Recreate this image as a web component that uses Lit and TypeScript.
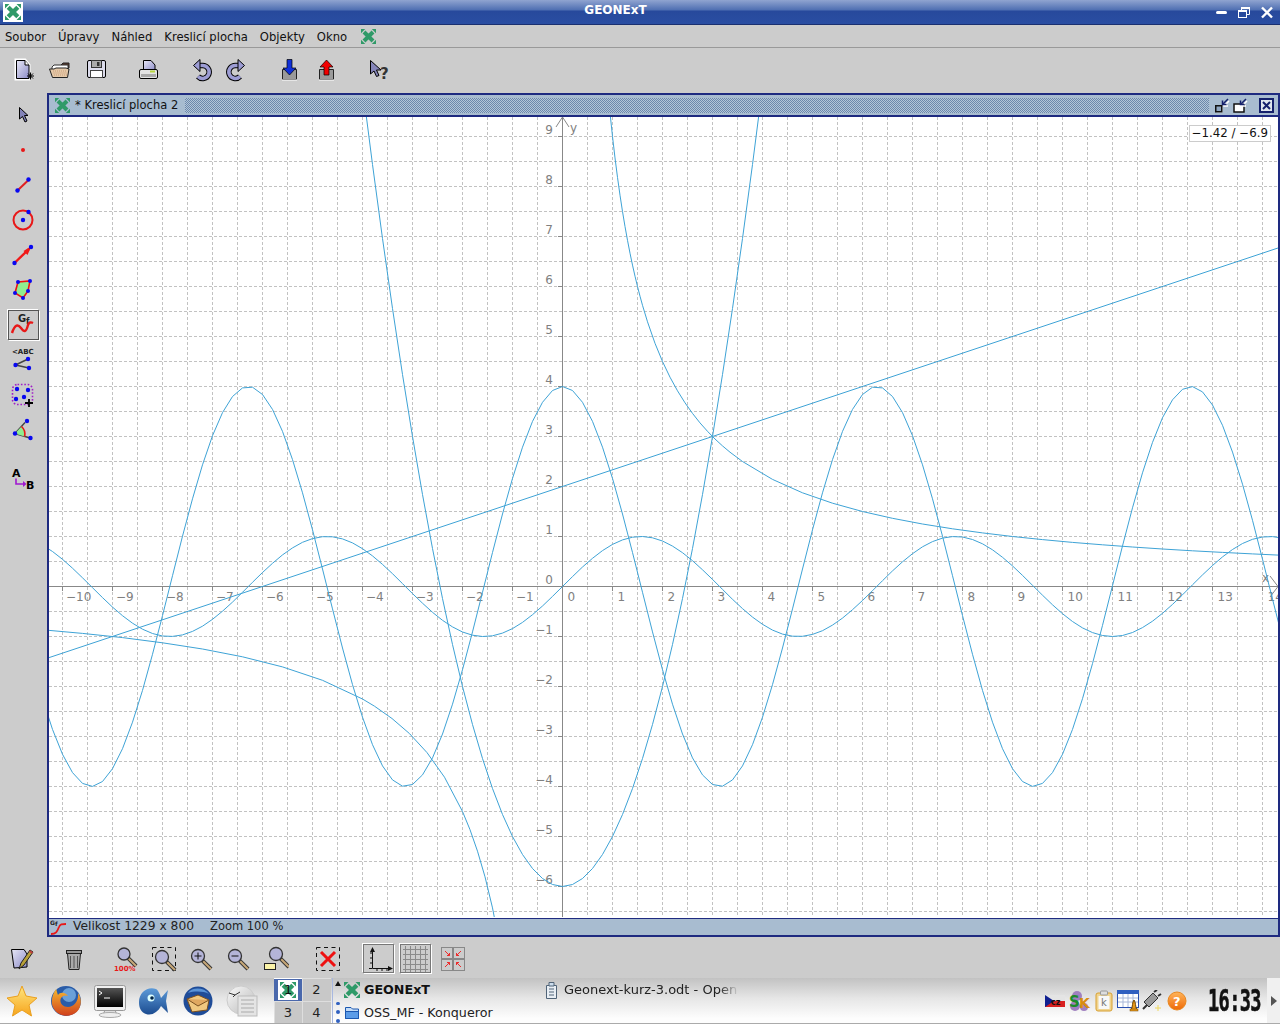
import { LitElement, html, svg, css } from "lit";
import { customElement } from "lit/decorators.js";

// small helper, all icons are drawn on a local pixel grid
const ic = (w: number, h: number, body: unknown) =>
  html`<svg width=${w} height=${h} viewBox="0 0 ${w} ${h}" aria-hidden="true">${body}</svg>`;

const xMark = (s: number, c = "#2f9a68") => {
  const a = s * 0.2;
  const b = s * 0.8;
  return svg`<g stroke=${c} stroke-width=${s * 0.27} fill=${c}>
    <path d="M${a} ${a}L${b} ${b}M${b} ${a}L${a} ${b}"/>
    </g>
    <path fill=${c} d="M0 ${s * 0.28}V0H${s * 0.28}ZM${s} ${s * 0.28}V0H${s * 0.72}ZM0 ${s * 0.72}V${s}H${s * 0.28}ZM${s} ${s * 0.72}V${s}H${s * 0.72}Z"/>`;
};

const defs = svg`<defs>
  <linearGradient id="lav" x1="0" y1="0" x2="1" y2="1"><stop offset="0" stop-color="#e8e8f6"/><stop offset="1" stop-color="#8c8cc8"/></linearGradient>
  <linearGradient id="ffx" x1="0" y1="0" x2="0" y2="1"><stop offset="0" stop-color="#f6b830"/><stop offset="1" stop-color="#d0401c"/></linearGradient>
  <linearGradient id="star" x1="0" y1="0" x2="0" y2="1"><stop offset="0" stop-color="#ffe680"/><stop offset="1" stop-color="#f6a41c"/></linearGradient>
  <linearGradient id="fish" x1="0" y1="0" x2="0" y2="1"><stop offset="0" stop-color="#5c9ad8"/><stop offset="1" stop-color="#1c4c90"/></linearGradient>
  <linearGradient id="screen" x1="0" y1="0" x2="0" y2="1"><stop offset="0" stop-color="#555"/><stop offset="1" stop-color="#000"/></linearGradient>
  <linearGradient id="orb" x1="0" y1="0" x2="0" y2="1"><stop offset="0" stop-color="#ffb45a"/><stop offset="1" stop-color="#ee6a08"/></linearGradient>
  <linearGradient id="moon" x1="0" y1="0" x2="1" y2="1"><stop offset="0" stop-color="#fafafa"/><stop offset="1" stop-color="#b8b8b8"/></linearGradient>
</defs>`;

const mag = (cx: number, cy: number, r: number) => svg`
  <path d="M${cx + r * 0.7} ${cy + r * 0.7}L${cx + r * 2} ${cy + r * 2}" stroke="#333" stroke-width="4"/>
  <path d="M${cx + r * 0.8} ${cy + r * 0.8}L${cx + r * 2} ${cy + r * 2}" stroke="#c8a878" stroke-width="2"/>
  <circle cx=${cx} cy=${cy} r=${r} fill="#b4b4d8" stroke="#333" stroke-width="1.3"/>`;

const blue = (x: number, y: number, r = 2.2) => svg`<circle cx=${x} cy=${y} r=${r} fill="#0808f0"/>`;

const topIcons = {
  doc: ic(24, 24, svg`<path d="M3 2H12L16 7V21H3Z" fill="url(#lav)" stroke="#fff" stroke-width="3"/><path d="M3.5 2.5H12L16 7V20.5H3.5Z" fill="url(#lav)" stroke="#000"/><path d="M12 2.5V7H16" fill="#fff" stroke="#000"/><path d="M14 18H21M17.5 14.5V21.5M15 15.5L20 20.5M20 15.5L15 20.5" stroke="#000"/>`),
  open: ic(24, 24, svg`<path d="M14 7L16 5H22V10H14Z" fill="#5c3c30" stroke="#222"/><path d="M5 9L7 7H21V12H5Z" fill="#fff" stroke="#333"/><path d="M2.5 11H7L9 10H19L22 11L20.5 19.5H5.5Z" fill="#e4c8a8" stroke="#222"/><path d="M6 13H20M6.500 15H20M7 17H20" stroke="#c89c78" stroke-dasharray="1 1"/>`),
  save: ic(24, 24, svg`<rect x="3.5" y="2.5" width="18" height="17" rx="1.5" fill="#dcdcec" stroke="#000"/><rect x="7.5" y="2.5" width="10" height="7" fill="#aaa" stroke="#333"/><rect x="13" y="4" width="2.5" height="4" fill="#333"/><rect x="6.5" y="12.5" width="12" height="7" fill="#fff" stroke="#444"/>`),
  print: ic(24, 24, svg`<path d="M7.5 2.5H15L19 7V13H7.5Z" fill="url(#lav)" stroke="#000"/><rect x="3.5" y="11.5" width="18" height="9" rx="1.5" fill="#e4e4e4" stroke="#000"/><rect x="5" y="16" width="15" height="3" fill="#aaa"/><rect x="14" y="12.5" width="5" height="2" fill="#b8d840"/>`),
  undo: ic(24, 24, svg`<path d="M10 7.500H13A6.500 6.500 0 1 1 9 18.500" fill="none" stroke="#000" stroke-width="5.500"/><path d="M10 7.500H13A6.500 6.500 0 1 1 9 18.500" fill="none" stroke="#9c9cd4" stroke-width="3.500"/><path d="M11 1.500L4.500 7.500L11 13.500Z" fill="#9c9cd4" stroke="#000"/>`),
  redo: ic(24, 24, svg`<path d="M14 7.500H11A6.500 6.500 0 1 0 15 18.500" fill="none" stroke="#000" stroke-width="5.500"/><path d="M14 7.500H11A6.500 6.500 0 1 0 15 18.500" fill="none" stroke="#9c9cd4" stroke-width="3.500"/><path d="M13 1.500L19.500 7.500L13 13.500Z" fill="#9c9cd4" stroke="#000"/>`),
  down: ic(24, 24, svg`<path d="M5.5 11.5H19.5V21.5H5.5Z" fill="#9a9a9a" stroke="#222"/><path d="M5 22H20" stroke="#fff"/><path d="M10 1.5H15V10H19L12.5 17L6 10H10Z" fill="#1030d8" stroke="#000" stroke-width=".7"/>`),
  up: ic(24, 24, svg`<path d="M5.5 11.5H19.5V21.5H5.5Z" fill="#9a9a9a" stroke="#222"/><path d="M5 22H20" stroke="#fff"/><path d="M10 17H15V9H19L12.5 2L6 9H10Z" fill="#f00000" stroke="#000" stroke-width=".7"/>`),
  help: ic(24, 24, svg`<path d="M4.5 2.5V16L8 13L10.5 18.5L13 17.5L10.5 12H15Z" fill="#8484b8" stroke="#000"/><text class="ico-b" x="14" y="21" font-size="15" fill="#333">?</text>`),
};

const leftIcons = [
  ic(24, 24, svg`<path d="M8.5 4.5V16L11.5 13.5L14 19L16 18L13.5 12.5H17Z" fill="#8484b8" stroke="#000"/>`),
  ic(24, 24, svg`<circle cx="12" cy="12" r="2" fill="#e81818"/>`),
  ic(24, 24, svg`<path d="M6.5 17.5L17.5 7" stroke="#e02020" stroke-width="2"/>${blue(6.5, 17.5)}${blue(17.5, 6.5)}`),
  ic(24, 24, svg`<circle cx="12" cy="12" r="9.5" fill="none" stroke="#e81818" stroke-width="2"/>${blue(12, 12)}${blue(17.5, 4)}`),
  ic(24, 24, svg`<path d="M3.5 20L18 6" stroke="#f01818" stroke-width="2.4"/><path d="M20.5 3L12.5 8L16.5 12Z" fill="#f01818"/>${blue(3.5, 20)}${blue(20, 4)}`),
  ic(24, 24, svg`<path d="M7 4L19 3L17 13L12 20L4 15Z" fill="#90ec90" stroke="#ee1010" stroke-width="1.6"/>${blue(7, 4, 2)}${blue(19, 3, 2)}${blue(17, 13, 2)}${blue(12, 20, 2)}${blue(4, 15, 2)}`),
  ic(24, 24, svg`<text class="ico-b" x="7" y="9" font-size="10" fill="#222">G</text><text class="ico-b" x="15" y="11" font-size="8" fill="#222">f</text><path d="M1 20C4 11 7 11 10 15S15 20 17 12C18 9 20 9 22 10" fill="none" stroke="#e81818" stroke-width="2.4"/>`),
  ic(24, 24, svg`<text class="ico-b" x="1" y="6" font-size="7" fill="#222">&lt;ABC</text><path d="M4.5 17L17 11M4.5 17L18 20" stroke="#444" stroke-width="1.4"/>${blue(4.5, 17)}${blue(17, 11)}${blue(18, 20)}`),
  ic(24, 24, svg`<rect x="1.500" y="1.500" width="20" height="20" rx="5" fill="none" stroke="#a020c8" stroke-width="1.600" stroke-dasharray="1.600 1.800"/>${blue(6, 6)}${blue(17, 7)}${blue(5, 16)}${blue(13, 14)}<path d="M14 20H22M18 16V24" stroke="#000" stroke-width="1.800"/>`),
  ic(24, 24, svg`<path d="M4 15.500L14 4.500M4 15.500L19 20" stroke="#444" stroke-width="1.400"/><path d="M4 15.500L10.500 8.500A10 10 0 0 1 13.500 18.500Z" fill="#90ec90"/><path d="M10.500 8.500A10 10 0 0 1 13.500 18.500" fill="none" stroke="#e81818" stroke-width="1.600"/>${blue(4, 15.5)}${blue(16, 3)}${blue(19.5, 20)}`),
  ic(24, 24, svg`<text class="ico-b" x="1" y="11" font-size="11" fill="#000">A</text><path d="M5 12.500V18H13" fill="none" stroke="#a018d0" stroke-width="1.600"/><path d="M12 15L15.500 18L12 21Z" fill="#a018d0"/><text class="ico-b" x="15" y="23" font-size="11" fill="#000">B</text>`),
];

const dashed = svg`<rect x="1.500" y="1.500" width="23" height="23" fill="none" stroke="#111" stroke-dasharray="4 3.500"/>`;

const bottomIcons = {
  edit: ic(24, 24, svg`<path d="M1.500 2.500H14L17 7V20L4 21Z" fill="url(#lav)" stroke="#000"/><path d="M9 22L11 16L20 3L23 5L14 18Z" fill="#b8a038" stroke="#222"/><path d="M19.500 4L22.500 6" stroke="#c04040" stroke-width="2"/>`),
  trash: ic(24, 24, svg`<path d="M5.500 6.500H18.500L17 22.500H7Z" fill="#aaa" stroke="#222"/><path d="M8.500 9V21M12 9V21M15.500 9V21" stroke="#555"/><rect x="4.500" y="3.500" width="15" height="3" fill="#999" stroke="#222"/>`),
  z100: ic(26, 26, svg`${mag(10, 8, 6)}<text class="ico-b" x="0" y="25" font-size="7" fill="#e81818">100%</text>`),
  zbox: ic(26, 26, svg`${dashed}${mag(11, 11, 6.5)}`),
  zin: ic(24, 24, svg`${mag(9, 9, 6.5)}<path d="M5.500 9H12.500M9 5.500V12.500" stroke="#111"/>`),
  zout: ic(24, 24, svg`${mag(9, 9, 6.5)}<path d="M5.500 9H12.500" stroke="#111"/>`),
  zfit: ic(26, 26, svg`${mag(13, 8, 6.5)}<rect x="1.500" y="17.500" width="11" height="6" fill="#fbf4a8" stroke="#222"/>`),
  del: ic(26, 26, svg`${dashed}<path d="M6 6L20 20M20 6L6 20" stroke="#ee1010" stroke-width="3"/>`),
  axes: ic(29, 28, svg`<path d="M8.500 4V23.500H27" fill="none" stroke="#111"/><path d="M8.500 2L6 7H11ZM29 23.500L24 21V26Z" fill="#111"/><path d="M5 23.500H8M8.500 8H6M8.500 13H6M8.500 18H6M13 26V24M18 26V24M23 26V24" stroke="#111"/>`),
  grid: ic(29, 28, svg`<path d="M2 4.500H27M2 9.500H27M2 14.500H27M2 19.500H27M2 24.500H27M4.500 1V27M9.500 1V27M14.500 1V27M19.500 1V27M24.500 1V27" stroke="#8a8a8a"/>`),
  snap: ic(26, 26, svg`<rect x="1.500" y="1.500" width="23" height="23" fill="none" stroke="#888"/><path d="M1 13H25M13 1V25" stroke="#888" stroke-width="2"/><path d="M5 5L9.500 9.500M21 5L16.500 9.500M5 21L9.500 16.500M21 21L16.500 16.500M9.500 9.500H7M9.500 9.500V7M16.500 9.500H19M16.500 9.500V7M9.500 16.500H7M9.500 16.500V19M16.500 16.500H19M16.500 16.500V19" stroke="#f01818" stroke-width=".9"/>`),
};

const launchers = [
  ic(32, 32, svg`<path d="M16 1L20 11L31 13L23 20L25.500 31L16 25L6.500 31L9 20L1 13L12 11Z" fill="url(#star)" stroke="#eaa020"/>`),
  ic(32, 32, svg`<circle cx="16" cy="16" r="15" fill="#2a5ca8"/><circle cx="19" cy="10" r="7" fill="#6aa0d8"/><path d="M6 4C2 10 0 18 4 24C9 33 24 33 29 24C32 18 31 12 28 8C29 16 24 22 18 22C12 22 9 17 11 13C13 10 16 10 18 11C15 7 10 7 8 10C7 8 7 6 6 4Z" fill="url(#ffx)"/>`),
  ic(34, 34, svg`<path d="M12 26H22L24 31H10Z" fill="#ddd" stroke="#999"/><ellipse cx="17" cy="31" rx="11" ry="2.500" fill="#eee" stroke="#aaa"/><rect x="1.500" y="1.500" width="31" height="25" rx="2" fill="#f0f0f0" stroke="#999"/><rect x="4" y="4" width="26" height="19" fill="url(#screen)"/><path d="M6 7L9 9L6 11" stroke="#fff" fill="none"/><path d="M11 14H17" stroke="#fff"/>`),
  ic(32, 32, svg`<path d="M1 17C1 7 10 1 18 4C20 5 22 9 23 13L30 5L28 16L30 28L23 21C20 27 14 31 8 29C3 27 1 23 1 17Z" fill="url(#fish)"/><circle cx="13" cy="13" r="3.500" fill="#dff"/><circle cx="14" cy="13" r="1.800" fill="#024"/>`),
  ic(32, 32, svg`<circle cx="16" cy="16" r="14.500" fill="#1f4c98"/><path d="M6 8C10 2 22 2 27 9C22 6 12 6 6 8Z" fill="#5a94d8"/><path d="M5 14L16 10L27 15L25 25L10 27Z" fill="#f0c880" stroke="#7a5020"/><path d="M5 14L16 21L27 15" fill="#e0a860" stroke="#7a5020"/>`),
  ic(32, 32, svg`<circle cx="15" cy="15" r="14" fill="url(#moon)" stroke="#ccc"/><path d="M3 8L9 10L14 7M9 10L7 12" stroke="#333" fill="none"/><rect x="12" y="11" width="19" height="20" fill="#e4e4e4" stroke="#bbb"/><path d="M15 15H28M15 19H28M15 23H28M15 27H28" stroke="#aaa"/>`),
];

const tray = [
  ic(20, 14, svg`<rect y="1" width="20" height="6" fill="#e4e4e4"/><rect y="7" width="20" height="6" fill="#d82020"/><path d="M0 1L9 7L0 13Z" fill="#102090"/><text class="ico-b" x="6" y="11" font-size="8" fill="#111">cz</text>`),
  ic(22, 22, svg`<circle cx="8" cy="6" r="5" fill="#a080c0"/><circle cx="6" cy="16" r="5" fill="#a080c0"/><circle cx="15" cy="17" r="4" fill="#a080c0"/><text class="ico-b" x="0" y="17" font-size="15" fill="#1c8c2c">S</text><text class="ico-b" x="10" y="18" font-size="14" fill="#d88c10">K</text>`),
  ic(18, 22, svg`<rect x="1" y="3" width="16" height="18" rx="2" fill="#f0d490" stroke="#d8a030"/><rect x="3.500" y="6" width="11" height="13" fill="#f8f8f8"/><rect x="5.500" y="1" width="7" height="4" rx="1" fill="#ddd" stroke="#999"/><text x="6" y="16" font-size="10" fill="#777" class="ico">k</text>`),
  ic(24, 24, svg`<rect x=".5" y="1.500" width="21" height="17" fill="#fff" stroke="#2850b0"/><rect y="1" width="22" height="4" fill="#3060c0"/><path d="M1 9H21M1 13H21M6 5V18M11 5V18M16 5V18" stroke="#a8b8d8"/><path d="M14 21C16 18 15 13 17 11C19 13 18 18 20 21Z" fill="#e89818" stroke="#704808"/><rect x="13" y="20" width="8" height="2" fill="#e89818" stroke="#704808" stroke-width=".5"/>`),
  ic(22, 22, svg`<path d="M3 12L12 3L17 8L8 17Z" fill="#999" stroke="#333"/><path d="M13 2L16 0M17 6L20 4M6 15L2 19" stroke="#333" stroke-width="2"/><path d="M17 15V21M14 18H20" stroke="#eed860"/>`),
  ic(20, 20, svg`<circle cx="10" cy="10" r="9" fill="url(#orb)" stroke="#e88820"/><text class="ico-b" x="6" y="15" font-size="13" fill="#fff">?</text>`),
];

const px = (x: number) => 513.5 + 50 * x;
const py = (y: number) => 469.5 - 50 * y;

function plot(f: (x: number) => number, from: number, to: number, step: number) {
  const pts: string[] = [];
  for (let x = from; x <= to + 1e-6; x += step) {
    pts.push(`${px(x).toFixed(1)},${py(f(x)).toFixed(1)}`);
  }
  return pts.join(" ");
}

const hyper = (x: number) => 9 / x;

const curves = [
  plot(Math.sin, -10.4, 14.4, 0.2),
  plot((x) => 4 * Math.cos(x), -10.4, 14.4, 0.2),
  plot((x) => x / 3 + 2, -10.4, 14.4, 24.8),
  plot((x) => x * x - 6, -4.2, 4.2, 0.2),
  plot(hyper, 0.8, 1.6, 0.05) + " " + plot(hyper, 1.7, 3.4, 0.15) + " " + plot(hyper, 3.6, 15, 0.6),
  plot(hyper, -10.4, -4, 0.8) + " " + plot(hyper, -3.76, -2.2, 0.35) + " " + plot(hyper, -2, -1.2, 0.15),
];

const range = (a: number, b: number) => Array.from({ length: b - a + 1 }, (_, i) => a + i);

const tickLabel = (k: number) => String(k).replace("-", "\u2212");

function plane() {
  const vs = range(-20, 29).map((k) => 513.5 + 25 * k).filter((x) => x > 0 && x < 1229);
  const hs = range(-18, 18).map((k) => 469.5 + 25 * k).filter((y) => y > 0 && y < 800);
  return html`<svg class="plane" width="1229" height="800" viewBox="0 0 1229 800">
    <g class="grid">
      ${vs.map((x) => svg`<line x1=${x} x2=${x} y1="0" y2="800"/>`)}
      ${hs.map((y) => svg`<line x1="0" x2="1229" y1=${y} y2=${y}/>`)}
    </g>
    <g class="axis">
      <line x1="0" x2="1229" y1="469.5" y2="469.5"/>
      <line x1="513.5" x2="513.5" y1="0" y2="800"/>
      ${range(-10, 14).map((k) => svg`<line x1=${px(k)} x2=${px(k)} y1="469.5" y2="474"/>`)}
      ${range(-6, 9).map((k) => svg`<line x1="509" x2="513.5" y1=${py(k)} y2=${py(k)}/>`)}
    </g>
    <path class="arrow" d="M1221 459L1229 469.5L1221 480M507 10L513.5 0L520 10"/>
    <g class="lbl">
      ${range(-10, 14).map((k) => svg`<text x=${px(k) + (k < 0 ? 3.5 : 5)} y="484">${tickLabel(k)}</text>`)}
      ${range(-6, 9).map((k) => svg`<text x="504" y=${py(k) - 3} text-anchor="end">${tickLabel(k)}</text>`)}
      <text x="521" y="15">y</text>
      <text x="1213" y="465">x</text>
    </g>
    <g class="curves">
      ${curves.map((p) => svg`<polyline points=${p}/>`)}
    </g>
  </svg>`;
}

@customElement("app-root")
export class AppRoot extends LitElement {
  static styles = css`
    :host {
      display: block;
      width: 1280px;
      height: 1024px;
      overflow: hidden;
      background: #cccccc;
      font-family: "DejaVu Sans", "Liberation Sans", sans-serif;
      font-size: 12px;
      color: #111;
    }
    svg { display: block; flex: none; }
    .ico-b { font-family: "DejaVu Sans", sans-serif; font-weight: 700; }
    .ico { font-family: "DejaVu Sans", sans-serif; }
    .app { display: flex; flex-direction: column; height: 1024px; }

    .titlebar {
      height: 25px;
      box-sizing: border-box;
      flex: none;
      display: flex;
      align-items: center;
      padding: 0 4px 0 3px;
      border-bottom: 1px solid #1a3070;
      background: linear-gradient(#90a4d0 0, #4f6fb2 10px, #27499c 11px, #2a4ea2 24px);
      color: #fff;
    }
    .titlebar .name {
      flex: 1;
      text-align: center;
      font-weight: 700;
      font-size: 12px;
      margin-top: -5px;
      padding-right: 6px;
    }
    .applogo { width: 16px; height: 16px; padding: 2px; background: #fff; }
    .wm { display: flex; gap: 6px; }

    .menubar {
      height: 23px;
      box-sizing: border-box;
      flex: none;
      display: flex;
      align-items: center;
      gap: 12px;
      padding: 2px 0 0 5px;
      border-bottom: 1px solid #999;
      font-size: 11.6px;
    }
    .menubar .logo { margin-left: 2px; }

    .toolbar { height: 45px; box-sizing: border-box; flex: none; display: flex; align-items: center; padding: 0 0 2px 13px; }

    .main { height: 844px; flex: none; display: flex; }
    .tools { width: 47px; box-sizing: border-box; flex: none; display: flex; flex-direction: column; align-items: center; padding: 4px 1px 0 0; }
    .tool { width: 31px; height: 35px; display: flex; align-items: center; justify-content: center; box-sizing: border-box; }
    .tool svg { overflow: visible; }
    .tool.on { height: 30px; margin: 3px 0 2px; border: 1px solid #555; box-shadow: 1px 1px 0 #fff, -1px -1px 0 #fff; }
    .tool.sep { margin-top: 13px; }

    .win { flex: 1; min-width: 0; display: flex; flex-direction: column; border: 2px solid #1e2a80; }
    .win-title {
      height: 20px;
      flex: none;
      display: flex;
      align-items: center;
      padding-left: 6px;
      background: #a8bcd0;
      border-bottom: 2px solid #1e2a80;
    }
    .win-title .cap { margin-left: 5px; width: 110px; white-space: nowrap; font-size: 11.5px; }
    .hatch {
      flex: 1;
      height: 15px;
      margin-right: 6px;
      background: repeating-conic-gradient(#6c88ac 0 25%, #b4c6d8 0 50%) 0 0 / 2px 2px;
    }
    .win-btns { display: flex; align-items: center; gap: 3px; padding-right: 4px; }
    .win-btns .close { margin-left: 8px; }

    .canvas { position: relative; flex: 1; background: #fff; overflow: hidden; }
    .plane { position: absolute; left: 0; top: 0; }
    .grid line { stroke: #c2c2c2; stroke-width: 1; stroke-dasharray: 3 2; shape-rendering: crispEdges; }
    .axis line { stroke: #888888; stroke-width: 1; shape-rendering: crispEdges; }
    .arrow { fill: none; stroke: #888888; }
    .lbl text { font-family: "DejaVu Sans", sans-serif; font-size: 12px; fill: #808080; }
    .curves polyline { fill: none; stroke: #3ea3d6; stroke-width: 1; }
    .coords {
      position: absolute;
      right: 7px;
      top: 8px;
      height: 15px;
      padding: 0 2px;
      line-height: 14px;
      font-size: 11.8px;
      background: #fff;
      border: 1px solid #ccc;
      white-space: nowrap;
    }

    .status {
      height: 16px;
      box-sizing: content-box;
      flex: none;
      display: flex;
      align-items: center;
      padding-left: 1px;
      background: #a8bcd0;
      border-top: 1px solid #1e2a80;
      color: #222;
    }
    .status span { margin-top: -2px; }
    .status .s1 { margin-left: 5px; width: 137px; white-space: nowrap; font-size: 12.3px; }
    .status .s2 { font-size: 11.5px; }

    .bottombar { height: 41px; box-sizing: border-box; flex: none; display: flex; align-items: center; padding-top: 2px; }
    .toggle { display: flex; align-items: center; justify-content: center; width: 31px; height: 29px; box-sizing: border-box; border: 1px solid #777; box-shadow: 1px 1px 0 #fff, -1px -1px 0 #fff; }
    .toggle.first { margin-left: 22px; }
    .toggle.next { margin-left: 6px; }

    .taskbar {
      height: 46px;
      flex: none;
      box-sizing: border-box;
      display: flex;
      border-bottom: 1px solid #aaa;
      background: linear-gradient(#c2c2c2, #e6e6e6 45%, #fdfdfd 90%);
    }
    .launch { display: flex; align-items: center; width: 274px; flex: none; }
    .launch span { width: 44px; display: flex; justify-content: center; }
    .pager { width: 57px; flex: none; display: grid; grid-template: 23px 22px / 28px 29px; background: #c8c8c8; font-size: 13px; }
    .pager div { display: flex; align-items: center; justify-content: center; color: #222; box-shadow: inset 1px 1px 0 #dedede; position: relative; }
    .pager .cur { background: #4a68ac; border-top: 1px solid #fff; box-shadow: none; }
    .pager .cur span { position: absolute; left: 10px; top: 3px; color: #111; }
    .handle { width: 11px; flex: none; border-left: 1px solid #a8b8e0; margin-left: 1px; display: flex; flex-direction: column; align-items: center; padding-top: 3px; gap: 5px; box-sizing: border-box; }
    .handle .space { height: 6px; }
    .tasks { width: 400px; flex: none; display: grid; grid-template: 23px 22px / 200px 200px; font-size: 12.7px; }
    .task { display: flex; align-items: center; gap: 4px; padding-left: 1px; white-space: nowrap; overflow: hidden; color: #222; }
    .task b { color: #111; }
    .task.fade {
      font-size: 13px;
      -webkit-mask-image: linear-gradient(to right, #000 88%, transparent 98%);
      mask-image: linear-gradient(to right, #000 88%, transparent 98%);
    }
    .tray { flex: 1; display: flex; align-items: center; gap: 4px; padding-left: 302px; }
    .tray .plug { margin-left: -4px; }
    .clock {
      width: 59px;
      flex: none;
      margin-left: 17px;
      font-family: "DejaVu Sans Mono", monospace;
      font-weight: 700;
      font-size: 30px;
      line-height: 46px;
      letter-spacing: -1px;
      color: #111;
      white-space: nowrap;
      -webkit-text-stroke: 0.6px #111;
      transform: scaleX(0.62);
      transform-origin: 0 50%;
    }
    .more { width: 13px; flex: none; display: flex; align-items: center; justify-content: center; background: #f0f0f0; }
    .spin { width: 0; height: 0; border: 3px solid transparent; border-bottom: 5px solid #111; border-top: 0; }
    .dot { width: 4px; height: 4px; border-radius: 50%; background: #3060c0; }
  `;

  private spaced(list: [number, unknown][]) {
    return list.map(([m, i]) => html`<span style="margin-left:${m}px">${i}</span>`);
  }

  render() {
    const t = topIcons;
    const b = bottomIcons;
    const arrowIn = svg`<path d="M13 2L8 7M8 3V7H12" fill="none" stroke="#fff" stroke-width="1.5" transform="translate(1 1)"/><path d="M13 1L7.500 6.500M7.500 2.500V6.500H11.500" fill="none" stroke="#14206c" stroke-width="1.500"/>`;
    return html`
      <div class="app">
        <svg width="0" height="0" style="position:absolute">${defs}</svg>
        <div class="titlebar">
          <div class="applogo">${ic(16, 16, xMark(16))}</div>
          <div class="name">GEONExT</div>
          <div class="wm">
            ${ic(16, 16, svg`<rect x="2" y="7" width="11" height="3" rx="1.5" fill="#fff"/>`)}
            ${ic(16, 16, svg`<path d="M5.500 6.500V3.500H13.500V10.500H10.500" fill="none" stroke="#fff"/><rect x="5" y="3" width="9" height="2" fill="#fff"/><rect x="2.500" y="6.500" width="8" height="7" fill="none" stroke="#fff"/><rect x="2" y="6" width="9" height="2" fill="#fff"/>`)}
            ${ic(18, 16, svg`<path d="M4 3.500L14 13.500M14 3.500L4 13.500" stroke="#fff" stroke-width="2.400"/>`)}
          </div>
        </div>

        <div class="menubar">
          <span>Soubor</span><span>Úpravy</span><span>Náhled</span><span>Kreslicí plocha</span><span>Objekty</span><span>Okno</span>
          <span class="logo">${ic(16, 16, xMark(15))}</span>
        </div>

        <div class="toolbar">
          ${this.spaced([
            [0, t.doc], [10, t.open], [13, t.save], [28, t.print], [29, t.undo], [12, t.redo],
            [28, t.down], [13, t.up], [28, t.help],
          ])}
        </div>

        <div class="main">
          <div class="tools">
            ${leftIcons.map((ico, i) =>
              html`<div class="tool ${i === 6 ? "on" : ""} ${i === 10 ? "sep" : ""}">${ico}</div>`)}
          </div>
          <div class="win">
            <div class="win-title">
              ${ic(15, 15, xMark(15))}
              <span class="cap">* Kreslicí plocha 2</span>
              <div class="hatch"></div>
              <div class="win-btns">
                ${ic(15, 15, svg`<rect x="1.500" y="8.500" width="6" height="6" fill="#fff"/><rect x=".75" y="7.750" width="6" height="6" fill="#8fa6c0" stroke="#111" stroke-width="1.500"/>${arrowIn}`)}
                ${ic(15, 15, svg`<rect x="1" y="6" width="10" height="8" fill="#fff" stroke="#111" stroke-width="1.500"/>${arrowIn}`)}
                <span class="close">${ic(15, 15, svg`<rect x="1" y="1" width="13" height="13" fill="#dfe6ee" stroke="#14206c" stroke-width="2"/><path d="M4 4L11 11M11 4L4 11" stroke="#14206c" stroke-width="2"/>`)}</span>
              </div>
            </div>
            <div class="canvas">
              ${plane()}
              <div class="coords">−1.42 / −6.9</div>
            </div>
            <div class="status">
              ${ic(18, 16, svg`<text class="ico-b" x="0" y="6" font-size="6" fill="#222">G</text><text class="ico-b" x="5" y="7" font-size="6" fill="#222">f</text><path d="M1 15C6 15 7 13 9 8C10 5 12 5 16 5" fill="none" stroke="#e81818" stroke-width="1.800"/>`)}
              <span class="s1">Velikost 1229 x 800</span>
              <span class="s2">Zoom 100 %</span>
            </div>
          </div>
        </div>

        <div class="bottombar">
          ${this.spaced([
            [10, b.edit], [28, b.trash], [28, b.z100], [11, b.zbox], [12, b.zin], [13, b.zout], [13, b.zfit], [26, b.del],
          ])}
          <span class="toggle first">${b.axes}</span>
          <span class="toggle next">${b.grid}</span>
          ${this.spaced([[9, b.snap]])}
        </div>

        <div class="taskbar">
          <div class="launch">
            ${launchers.map((l) => html`<span>${l}</span>`)}
          </div>
          <div class="pager">
            <div class="cur">${ic(20, 20, svg`<rect width="20" height="20" fill="#fff"/><g transform="translate(2 2)">${xMark(16)}</g>`)}<span>1</span></div>
            <div>2</div><div>3</div><div>4</div>
          </div>
          <div class="handle">
            <div class="spin"></div>
            <div class="space"></div>
            <div class="dot"></div><div class="dot"></div><div class="dot"></div>
          </div>
          <div class="tasks">
            <div class="task">${ic(16, 16, xMark(16))}<b>GEONExT</b></div>
            <div class="task fade">
              ${ic(16, 18, svg`<path d="M2.500 4.500H12.500V17.500H2.500Z" fill="#e8eef4" stroke="#506478"/><path d="M5 1.500H10V5H5Z" fill="#cde" stroke="#506478"/><path d="M5 8H10M5 11H10M5 14H10" stroke="#506478"/>`)}
              Geonext-kurz-3.odt - Open
            </div>
            <div class="task">${ic(16, 16, svg`<path d="M1.500 14.500V3.500H7L8.500 5H14.500V14.500Z" fill="#c4dcf8" stroke="#1c58b0"/><path d="M1.500 14.500V7.500H14.500V14.500Z" fill="#5c9ce8" stroke="#1c58b0"/>`)}OSS_MF - Konqueror</div>
            <div></div>
          </div>
          <div class="tray">
            ${tray.map((i, n) => html`<span class=${n === 4 ? "plug" : ""}>${i}</span>`)}
          </div>
          <div class="clock">16:33</div>
          <div class="more"><svg width="6" height="10" viewBox="0 0 6 10"><path d="M0 0L6 5L0 10Z" fill="#555"/></svg></div>
        </div>
      </div>
    `;
  }
}
